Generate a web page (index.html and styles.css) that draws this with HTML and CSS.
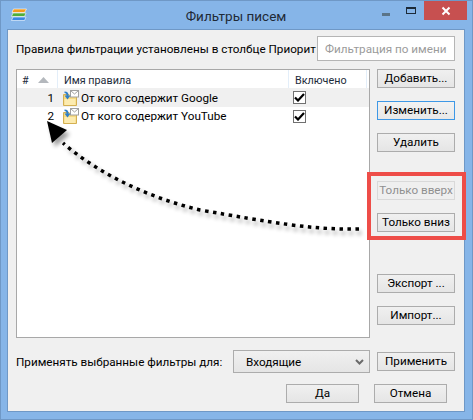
FILE: index.html
```html
<!DOCTYPE html>
<html lang="ru">
<head>
<meta charset="utf-8">
<title>Фильтры писем</title>
<link rel="stylesheet" href="styles.css">
</head>
<body>
<div class="window">
  <header class="titlebar">
    <svg class="app-icon" width="16" height="14" viewBox="0 0 16 14">
      <path d="M2.5 1 H15.5 L13.5 4.5 H1 Z" fill="#f59c1a" stroke="#fff" stroke-width=".6"/>
      <path d="M2 5 H15 L13.5 8.5 H0.5 Z" fill="#4fae3a" stroke="#fff" stroke-width=".6"/>
      <path d="M2 9 H15 L13.5 12.5 H0.5 Z" fill="#3b87e0" stroke="#fff" stroke-width=".6"/>
    </svg>
    <div class="title">Фильтры писем</div>
    <div class="controls">
      <span class="ctl-min"></span>
      <span class="ctl-max"></span>
      <span class="ctl-close">
        <svg width="10" height="10" viewBox="0 0 10 10"><path d="M1.5 1.5 L8.5 8.5 M8.5 1.5 L1.5 8.5" stroke="#fff" stroke-width="2"/></svg>
      </span>
    </div>
  </header>
  <main class="panel">
    <div class="top-row">
      <div class="top-label">Правила фильтрации установлены в столбце Приорит</div>
      <input class="search" type="text" placeholder="Фильтрация по имени">
    </div>
    <div class="mid-row">
      <div class="list">
        <div class="list-head">
          <div class="hcell hcell-num"><span>#</span><svg width="11" height="6" viewBox="0 0 11 6"><path d="M5.5 0 L11 6 H0 Z" fill="#b4b8bd"/></svg></div>
          <div class="hcell hcell-name">Имя правила</div>
          <div class="hcell hcell-on">Включено</div>
        </div>
        <div class="list-row list-row-alt">
          <div class="cell-num">1</div>
          <div class="cell-name">
            <svg class="rule-icon" width="16" height="16" viewBox="0 0 16 16"><use href="#rule"/></svg>
            <span>От кого содержит Google</span>
          </div>
          <div class="cell-on"><span class="check"><svg width="11" height="9" viewBox="0 0 11 9"><path d="M1 4.5 L4 7.5 L10 1" fill="none" stroke="#000" stroke-width="2.2"/></svg></span></div>
        </div>
        <div class="list-row">
          <div class="cell-num">2</div>
          <div class="cell-name">
            <svg class="rule-icon" width="16" height="16" viewBox="0 0 16 16"><use href="#rule"/></svg>
            <span>От кого содержит YouTube</span>
          </div>
          <div class="cell-on"><span class="check"><svg width="11" height="9" viewBox="0 0 11 9"><path d="M1 4.5 L4 7.5 L10 1" fill="none" stroke="#000" stroke-width="2.2"/></svg></span></div>
        </div>
      </div>
      <div class="side">
        <button class="btn">Добавить...</button>
        <button class="btn btn-focus gap-s">Изменить...</button>
        <button class="btn gap-s">Удалить</button>
        <button class="btn btn-disabled gap-m">Только вверх</button>
        <button class="btn gap-s">Только вниз</button>
        <button class="btn gap-l">Экспорт ...</button>
        <button class="btn gap-s">Импорт...</button>
      </div>
    </div>
    <div class="apply-row">
      <div class="apply-label">Применять выбранные фильтры для:</div>
      <div class="select">
        <span>Входящие</span>
        <svg width="9" height="6" viewBox="0 0 9 6"><path d="M1 1 L4.5 4.5 L8 1" fill="none" stroke="#6a6a6a" stroke-width="2"/></svg>
      </div>
      <button class="btn">Применить</button>
    </div>
    <div class="footer-row">
      <button class="btn btn-wide">Да</button>
      <button class="btn btn-wide">Отмена</button>
    </div>
  </main>

  <svg class="overlay" width="473" height="420" viewBox="0 0 473 420">
    <defs>
      <symbol id="rule" viewBox="0 0 16 16">
        <path d="M0.5 4.5 H6 L7 5.5 H13.5 V15.5 H0.5 Z" fill="#f6d97f" stroke="#d4b052" stroke-width="1"/>
        <rect x="1.5" y="9" width="11" height="6" fill="#fcebb0"/>
        <rect x="7.5" y="0.5" width="8" height="6.5" fill="#fff" stroke="#a0a0a0" stroke-width="1"/>
        <path d="M7.5 0.5 L11.5 4 L15.5 0.5" fill="none" stroke="#a0a0a0" stroke-width="1"/>
        <path d="M1.5 1.5 C4.5 1.5 5.5 3 5.5 5.5 H7.5 L4.5 9.5 L1.5 5.5 H3.5 C3.5 4 3 3 1.5 3 Z" fill="#2f7fc8"/>
      </symbol>
      <filter id="soft" x="-10%" y="-30%" width="120%" height="160%">
        <feGaussianBlur stdDeviation="2"/>
      </filter>
    </defs>
    <g class="arrow-shadow" filter="url(#soft)">
      <path d="M361 233 C312 234 272 226 203 214 C153 202 103 179 66 147" fill="none" stroke="#000" stroke-width="3.5" stroke-dasharray="3.5 4.5"/>
      <path d="M50 126 L55 147 L70 134 Z" fill="#000"/>
    </g>
    <path class="arrow-line" d="M359 229 C310 230 270 222 200 210 C150 198 100 175 63 143"/>
    <path d="M47 121 L52 143 L67 130 Z" fill="#000"/>
    <rect class="callout" x="369" y="174" width="95" height="64"/>
  </svg>
</div>
</body>
</html>
```
FILE: styles.css
```css
* { box-sizing: border-box; }
html, body { margin: 0; padding: 0; }
body {
  width: 473px;
  height: 420px;
  overflow: hidden;
  font-family: Roboto, "Noto Sans", sans-serif;
  font-size: 11.7px;
  color: #000;
}
.window {
  position: relative;
  width: 473px;
  height: 420px;
  display: flex;
  flex-direction: column;
  background: #86b5e8;
  border: 1px solid #6f98c6;
  padding: 0 7px 7px 6px;
}
.titlebar {
  height: 28px;
  display: flex;
  align-items: center;
  position: relative;
  flex: none;
}
.app-icon { margin: 0 0 1px 4px; }
.title {
  position: absolute;
  left: 0;
  right: 0;
  top: 4px;
  text-align: center;
  font-size: 13.5px;
  line-height: 22px;
  color: #1f2a36;
}
.controls {
  position: absolute;
  right: -2px;
  top: 0;
  display: flex;
  align-items: flex-start;
}
.ctl-min {
  width: 8px;
  height: 3px;
  background: #5a7488;
  margin: 12px 16px 0 0;
}
.ctl-max {
  width: 10px;
  height: 7px;
  border: 1px solid #1c2a38;
  border-top-width: 2px;
  margin: 6px 8px 0 0;
}
.ctl-close {
  width: 43px;
  height: 19px;
  background: #c75050;
  display: flex;
  align-items: center;
  justify-content: center;
}
.panel {
  flex: 1;
  background: #f0f0f0;
  border: 1px solid #6f98c6;
  padding: 6px 9px 0 8px;
  display: flex;
  flex-direction: column;
}
.top-row {
  display: flex;
  height: 25px;
  align-items: center;
  margin-bottom: 8px;
}
.top-label {
  flex: 1;
  min-width: 0;
  white-space: nowrap;
}
.search {
  width: 138px;
  height: 25px;
  flex: none;
  border: 1px solid #b5b5b5;
  background: #fff;
  padding: 0 7px;
  font: inherit;
  outline: none;
}
.search::placeholder { color: #9b9b9b; opacity: 1; }
.mid-row {
  display: flex;
  height: 269px;
  gap: 7px;
}
.list {
  width: 354px;
  flex: none;
  background: #fff;
  border: 1px solid #a8a8a8;
}
.list-head {
  display: grid;
  grid-template-columns: 41px 231px 78px;
  height: 18px;
}
.hcell {
  display: flex;
  align-items: center;
  padding: 2px 0 0 6px;
  font-size: 10.8px;
  color: #1c2a3a;
  border-right: 1px solid #e3eef9;
}
.hcell-num { gap: 9px; padding-left: 5px; }
.list-row {
  display: grid;
  grid-template-columns: 41px 231px 78px;
  height: 18px;
  align-items: center;
}
.list-row-alt { background: #f0f0f0; height: 19px; }
.cell-num { text-align: right; padding-right: 4px; }
.cell-name {
  display: flex;
  align-items: center;
  gap: 2px;
  padding-left: 5px;
  white-space: nowrap;
}
.rule-icon { flex: none; }
.cell-on { padding-left: 4px; display: flex; }
.check {
  width: 13px;
  height: 13px;
  border: 1px solid #707070;
  background: #fff;
  display: flex;
  align-items: center;
  justify-content: center;
}
.side {
  width: 78px;
  flex: none;
  display: flex;
  flex-direction: column;
}
.btn {
  width: 78px;
  height: 19px;
  flex: none;
  padding: 0;
  border: 1px solid #acacac;
  background: linear-gradient(#f0f0f0, #e5e5e5);
  font: inherit;
  line-height: 15px;
  color: #000;
  white-space: nowrap;
}
.btn-focus { border-color: #3e98e6; background: linear-gradient(#f2f2f2, #e8e8e8); }
.btn-disabled { border-color: #d9d9d9; background: #efefef; color: #8f8f8f; }
.btn-wide { width: 73px; }
.gap-s { margin-top: 13px; }
.gap-m { margin-top: 29px; }
.gap-l { margin-top: 42px; }
.apply-row {
  display: flex;
  align-items: center;
  height: 23px;
  margin-top: 12px;
}
.apply-label { width: 217px; flex: none; white-space: nowrap; }
.select {
  width: 137px;
  height: 23px;
  flex: none;
  margin-right: 7px;
  border: 1px solid #acacac;
  background: linear-gradient(#f0f0f0, #e5e5e5);
  display: flex;
  align-items: center;
  justify-content: space-between;
  padding: 0 5px 0 12px;
}
.footer-row {
  display: flex;
  justify-content: flex-end;
  gap: 15px;
  margin-top: 11px;
  padding-right: 8px;
}
.overlay {
  position: absolute;
  left: -1px;
  top: -1px;
  pointer-events: none;
}
.arrow-shadow { opacity: .38; }
.arrow-line {
  fill: none;
  stroke: #000;
  stroke-width: 3.5;
  stroke-dasharray: 3.5 4.5;
}
.callout {
  fill: none;
  stroke: #ee4d48;
  stroke-width: 4;
}
```
